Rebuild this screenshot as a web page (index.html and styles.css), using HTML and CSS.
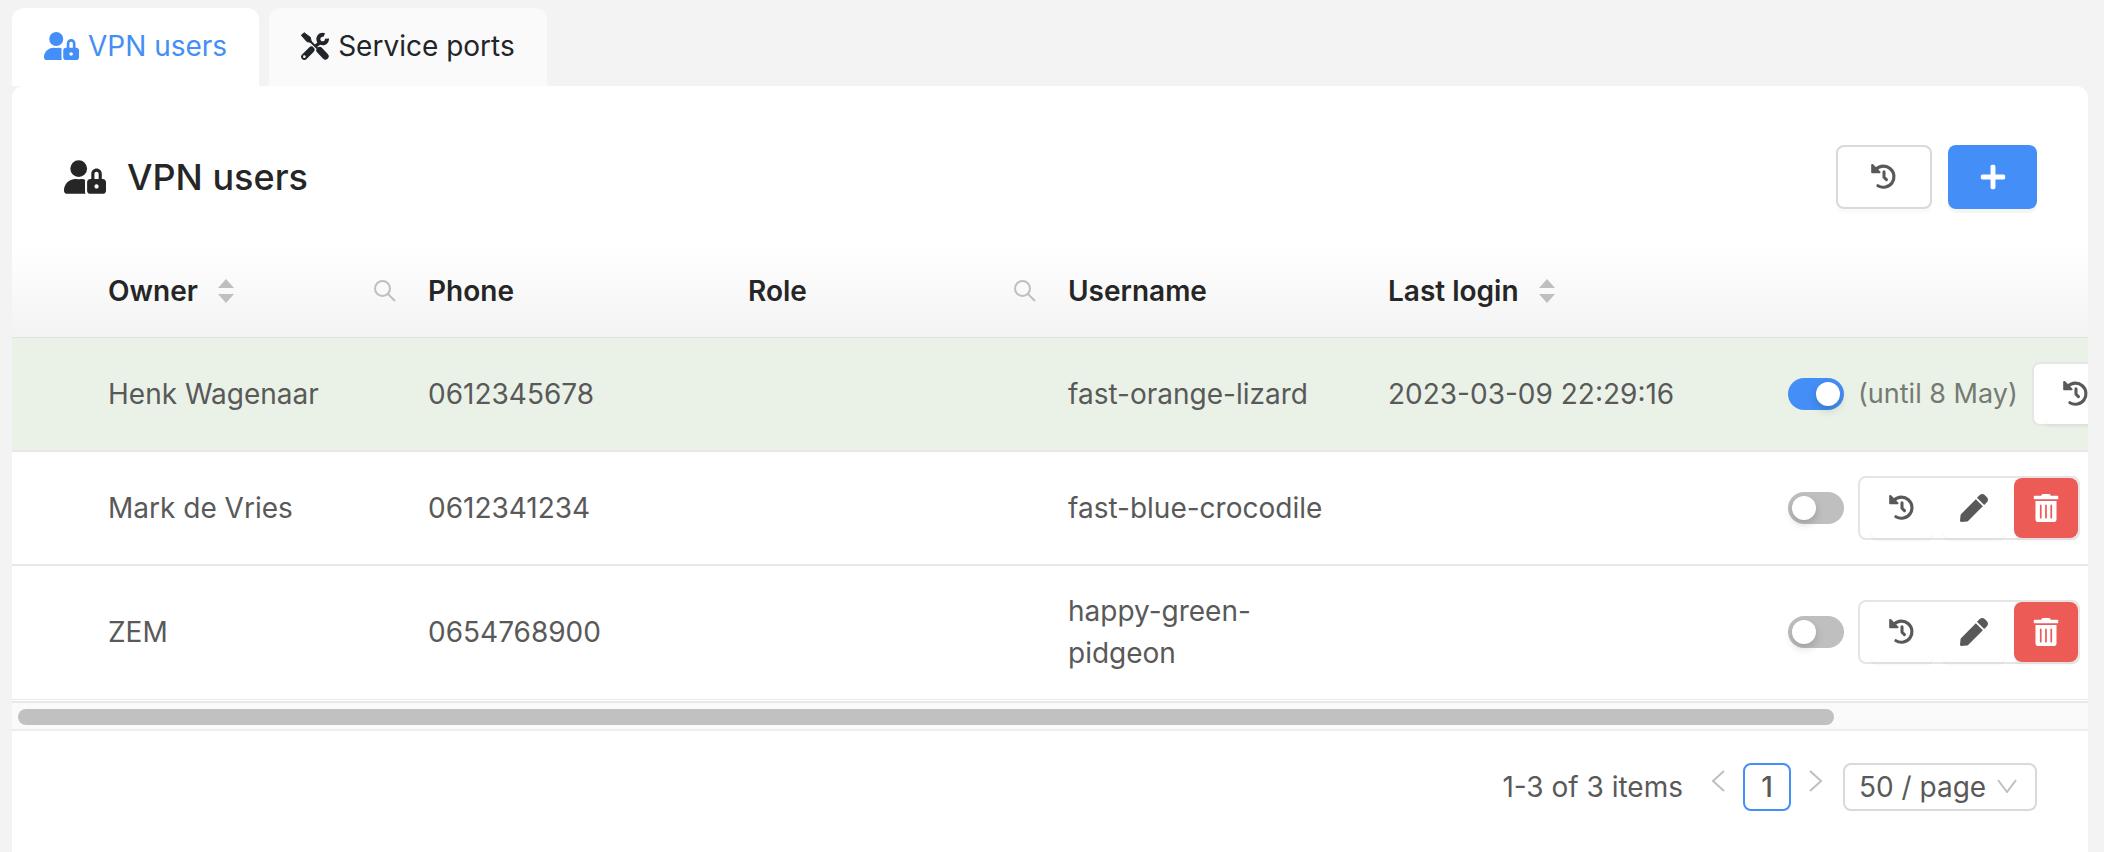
FILE: index.html
```html
<!DOCTYPE html>
<html lang="en">
<head>
    <meta charset="UTF-8">
    <title>VPN users</title>
    <meta name="viewport" content="width=device-width, initial-scale=1.0">
    <link rel="stylesheet" href="styles.css">
</head>
<body>
    <!-- Icons -->
    <svg class="sprite" aria-hidden="true">
        <symbol id="user-lock" viewBox="0 0 640 512">
            <path d="M224 256A128 128 0 1 0 224 0a128 128 0 1 0 0 256zm96 64c0-7 1-13 3-19c-15-8-32-13-49-13h-17a174 174 0 0 1-67 0h-16C78 288 0 366 0 462v2c0 27 21 48 48 48h281c-6-9-9-20-9-32zM592 288h-16v-80c0-44-36-80-80-80s-80 36-80 80v80h-16c-27 0-48 21-48 48v128c0 27 21 48 48 48h192c27 0 48-21 48-48V336c0-27-21-48-48-48zM496 432c-18 0-32-14-32-32s14-32 32-32 32 14 32 32-14 32-32 32zm32-144h-64v-80c0-18 14-32 32-32s32 14 32 32z"/>
        </symbol>
        <symbol id="tools" viewBox="0 0 84 84">
            <path d="M1 10L9 2L28 16L31 31L18 29z" stroke="currentColor" stroke-width="3" stroke-linejoin="round"/>
            <path d="M24 24L56 56" fill="none" stroke="currentColor" stroke-width="6"/>
            <path d="M56 55L73 73" fill="none" stroke="currentColor" stroke-width="20" stroke-linecap="round"/>
            <path d="M44 42L58 31" fill="none" stroke="currentColor" stroke-width="10"/>
            <path d="M70 9A13 13 0 1 0 78 20" fill="none" stroke="currentColor" stroke-width="12"/>
            <path d="M10 74L31 53" fill="none" stroke="currentColor" stroke-width="19" stroke-linecap="round"/>
            <circle class="hole" cx="10" cy="74" r="4"/>
        </symbol>
        <symbol id="history" viewBox="0 0 512 512">
            <path d="M4 22v140c0 13 9 22 22 22h140c20 0 29-23 15-37L41 7C27-7 4 2 4 22z"/>
            <path d="M100 108A208 208 0 1 1 136 436" fill="none" stroke="currentColor" stroke-width="62" stroke-linecap="round" transform="translate(0 -8)"/>
            <path d="M256 152v108l48 48" fill="none" stroke="currentColor" stroke-width="60" stroke-linecap="round" stroke-linejoin="round"/>
        </symbol>
        <symbol id="plus" viewBox="0 0 512 512">
            <path d="M464 208H304V48c0-18-14-32-32-32h-32c-18 0-32 14-32 32v160H48c-18 0-32 14-32 32v32c0 18 14 32 32 32h160v160c0 18 14 32 32 32h32c18 0 32-14 32-32V304h160c18 0 32-14 32-32v-32c0-18-14-32-32-32z"/>
        </symbol>
        <symbol id="pencil" viewBox="0 0 512 512">
            <path d="M290 94l128 128-270 270c-6 6-13 10-22 11L27 512c-15 2-29-11-27-27l11-99c1-8 5-16 11-22zM493 60l-41-41c-25-25-66-25-91 0l-51 51 132 132 51-51c25-25 25-66 0-91z"/>
        </symbol>
        <symbol id="trash" viewBox="0 0 448 512">
            <path d="M32 464c0 27 21 48 48 48h288c27 0 48-21 48-48V128H32zm272-256c0-21 32-21 32 0v224c0 21-32 21-32 0zm-96 0c0-21 32-21 32 0v224c0 21-32 21-32 0zm-96 0c0-21 32-21 32 0v224c0 21-32 21-32 0zM432 32H312l-9-19c-4-8-12-13-22-13H167c-9 0-18 5-22 13l-9 19H16C7 32 0 39 0 48v32c0 9 7 16 16 16h416c9 0 16-7 16-16V48c0-9-7-16-16-16z"/>
        </symbol>
        <symbol id="search" viewBox="0 0 22 22">
            <path d="M14 14L21 21M16 8.500A7.500 7.500 0 1 1 1 8.500A7.500 7.500 0 1 1 16 8.500" fill="none" stroke="currentColor" stroke-width="2"/>
        </symbol>
        <symbol id="sorter" viewBox="0 0 16 24">
            <path d="M8 0L16 9H0zM8 24L0 15H16z"/>
        </symbol>
    </svg>

    <!-- Tabs -->
    <nav class="tabs">
        <a class="tab active" href="#users"><svg class="icon-tab wide"><use href="#user-lock"/></svg>VPN users</a>
        <a class="tab" href="#ports"><svg class="icon-tab"><use href="#tools"/></svg>Service ports</a>
    </nav>

    <main class="card" id="users">
        <header class="card-header">
            <svg class="icon-title"><use href="#user-lock"/></svg>
            <h1>VPN users</h1>
            <button class="btn" aria-label="History"><svg class="icon"><use href="#history"/></svg></button>
            <button class="btn primary" aria-label="Add user"><svg class="icon"><use href="#plus"/></svg></button>
        </header>

        <div class="table-wrap">
            <table>
                <colgroup>
                    <col class="col-pad">
                    <col class="col-text">
                    <col class="col-text">
                    <col class="col-text">
                    <col class="col-text">
                    <col class="col-login">
                    <col class="col-actions">
                </colgroup>
                <thead>
                    <tr>
                        <th></th>
                        <th><div class="head">Owner <svg class="sorter"><use href="#sorter"/></svg><svg class="search"><use href="#search"/></svg></div></th>
                        <th>Phone</th>
                        <th><div class="head">Role <svg class="search"><use href="#search"/></svg></div></th>
                        <th>Username</th>
                        <th><div class="head">Last login <svg class="sorter"><use href="#sorter"/></svg></div></th>
                        <th></th>
                    </tr>
                </thead>
                <tbody>
                    <tr class="online">
                        <td></td>
                        <td>Henk Wagenaar</td>
                        <td>0612345678</td>
                        <td></td>
                        <td>fast-orange-lizard</td>
                        <td>2023-03-09 22:29:16</td>
                        <td>
                            <div class="actions">
                                <input class="switch" type="checkbox" aria-label="Enable Henk Wagenaar" checked>
                                <span class="until">(until 8 May)</span>
                                <div class="group">
                                    <button class="item" aria-label="History"><svg class="icon"><use href="#history"/></svg></button>
                                    <button class="item" aria-label="Edit"><svg class="icon-large"><use href="#pencil"/></svg></button>
                                    <button class="item danger" aria-label="Delete"><svg class="icon-large"><use href="#trash"/></svg></button>
                                </div>
                            </div>
                        </td>
                    </tr>
                    <tr>
                        <td></td>
                        <td>Mark de Vries</td>
                        <td>0612341234</td>
                        <td></td>
                        <td>fast-blue-crocodile</td>
                        <td></td>
                        <td>
                            <div class="actions">
                                <input class="switch" type="checkbox" aria-label="Enable Mark de Vries">
                                <div class="group">
                                    <button class="item" aria-label="History"><svg class="icon"><use href="#history"/></svg></button>
                                    <button class="item" aria-label="Edit"><svg class="icon-large"><use href="#pencil"/></svg></button>
                                    <button class="item danger" aria-label="Delete"><svg class="icon-large"><use href="#trash"/></svg></button>
                                </div>
                            </div>
                        </td>
                    </tr>
                    <tr>
                        <td></td>
                        <td>ZEM</td>
                        <td>0654768900</td>
                        <td></td>
                        <td>happy-green-<br>pidgeon</td>
                        <td></td>
                        <td>
                            <div class="actions">
                                <input class="switch" type="checkbox" aria-label="Enable ZEM">
                                <div class="group">
                                    <button class="item" aria-label="History"><svg class="icon"><use href="#history"/></svg></button>
                                    <button class="item" aria-label="Edit"><svg class="icon-large"><use href="#pencil"/></svg></button>
                                    <button class="item danger" aria-label="Delete"><svg class="icon-large"><use href="#trash"/></svg></button>
                                </div>
                            </div>
                        </td>
                    </tr>
                </tbody>
            </table>
        </div>
        <div class="scrollbar"><div class="thumb"></div></div>

        <!-- Pagination -->
        <footer class="pagination">
            <span class="total">1-3 of 3 items</span>
            <button class="arrow" aria-label="Previous page"><svg viewBox="0 0 14 22"><path d="M13 1L2 11L13 21"/></svg></button>
            <button class="page">1</button>
            <button class="arrow" aria-label="Next page"><svg viewBox="0 0 14 22"><path d="M1 1L12 11L1 21"/></svg></button>
            <div class="page-size">
                <select aria-label="Page size">
                    <option>50 / page</option>
                    <option>100 / page</option>
                </select>
                <svg class="caret" viewBox="0 0 20 14"><path d="M1 1L10 13L19 1"/></svg>
            </div>
        </footer>
    </main>
</body>
</html>
```
FILE: styles.css
```css
:root {
    --primary: #448ef7;
    --danger: #ed5b56;
    --text: #595959;
    --heading: #262626;
    --border: #d9d9d9;
    --line: #e8e8e8;
    --muted: #bfbfbf;
}

* {
    box-sizing: border-box;
}

body {
    margin: 0;
    padding: 8px 16px 0 12px;
    min-height: 100vh;
    display: flex;
    flex-direction: column;
    background: #f3f3f3;
    color: var(--text);
    font-family: Inter, "Liberation Sans", sans-serif;
    font-size: 28px;
    line-height: 42px;
}

svg {
    display: block;
    fill: currentColor;
    flex: none;
}

button, select {
    font: inherit;
    color: inherit;
    margin: 0;
    padding: 0;
}

.sprite {
    position: absolute;
    width: 0;
    height: 0;
}

/* Tabs */
.tabs {
    display: flex;
    gap: 10px;
}

.tab {
    display: flex;
    align-items: center;
    gap: 9px;
    height: 78px;
    padding: 0 32px 2px;
    border-radius: 12px 12px 0 0;
    background: #fafafa;
    color: #212529;
    text-decoration: none;
}

.tab.active {
    background: #fff;
    color: var(--primary);
}

.icon-tab {
    width: 28px;
    height: 28px;
}

.icon-tab.wide {
    width: 35px;
}

.hole {
    fill: #fafafa;
}

/* Card */
.card {
    flex: 1;
    background: #fff;
    border-radius: 12px 12px 0 0;
}

.card-header {
    display: flex;
    align-items: center;
    gap: 16px;
    padding: 59px 51px 37px 52px;
}

.icon-title {
    width: 42px;
    height: 34px;
    color: var(--heading);
}

h1 {
    flex: 1;
    margin: 0 0 0 5px;
    color: var(--heading);
    font-size: 36px;
    font-weight: 500;
}

.btn {
    display: flex;
    align-items: center;
    justify-content: center;
    width: 96px;
    height: 64px;
    border: 2px solid var(--border);
    border-radius: 8px;
    background: #fff;
    box-shadow: 0 4px 0 rgba(0, 0, 0, 0.02);
}

.btn.primary {
    width: 89px;
    border: 0;
    background: var(--primary);
    color: #fff;
    box-shadow: 0 4px 0 rgba(0, 0, 0, 0.04);
}

.icon {
    width: 26px;
    height: 26px;
}

.icon-large {
    width: 28px;
    height: 28px;
}

/* Table */
.table-wrap {
    overflow: hidden;
}

table {
    width: 2376px;
    table-layout: fixed;
    border-collapse: separate;
    border-spacing: 0;
}

.col-pad {
    width: 80px;
}

.col-text {
    width: 320px;
}

.col-login {
    width: 400px;
}

th {
    padding: 24px 16px 25px;
    border-bottom: 1px solid #e2e2e2;
    color: var(--heading);
    font-weight: 600;
    text-align: left;
}

thead tr {
    background: linear-gradient(#fff, #f3f3f3);
}

.head {
    display: flex;
    align-items: center;
}

.sorter {
    width: 16px;
    height: 24px;
    margin-left: 20px;
    color: var(--muted);
}

.search {
    width: 22px;
    height: 22px;
    margin-left: auto;
    color: var(--muted);
}

td {
    padding: 24px 16px;
    border-bottom: 2px solid var(--line);
}

tr:last-child td {
    padding-bottom: 25px;
    border-bottom-width: 1px;
}

.online {
    background: #eaf2e7;
}

.actions {
    display: flex;
    align-items: center;
    gap: 14px;
    height: 64px;
}

.until {
    color: #757a73;
    font-size: 27px;
}

.switch {
    appearance: none;
    display: flex;
    width: 56px;
    height: 32px;
    margin: 0;
    padding: 4px;
    border-radius: 16px;
    background: var(--muted);
}

.switch::before {
    content: '';
    width: 24px;
    height: 24px;
    border-radius: 50%;
    background: #fff;
    box-shadow: 0 4px 8px rgba(0, 35, 11, 0.2);
}

.switch:checked {
    justify-content: flex-end;
    background: var(--primary);
}

.group {
    display: flex;
    gap: 8px;
    padding-left: 10px;
    border: 2px solid #e5e5e5;
    border-radius: 8px;
    background: #fff;
}

.item {
    display: flex;
    align-items: center;
    justify-content: center;
    width: 64px;
    height: 60px;
    border: 0;
    border-radius: 8px;
    background: #fff;
    box-shadow: 0 4px 0 rgba(0, 0, 0, 0.02);
}

.item.danger {
    background: var(--danger);
    color: #fff;
}

/* Horizontal scrollbar */
.scrollbar {
    margin-top: 1px;
    padding: 6px 6px 4px;
    border-top: 2px solid var(--line);
    border-bottom: 2px solid #ededed;
    background: #fafafa;
}

.thumb {
    width: 88%;
    height: 16px;
    border-radius: 8px;
    background: #c1c1c1;
}

/* Pagination */
.pagination {
    display: flex;
    justify-content: flex-end;
    padding: 32px 51px 32px 0;
}

.total {
    margin-right: 28px;
    line-height: 48px;
}

.arrow {
    display: flex;
    align-items: center;
    height: 36px;
    border: 0;
    background: none;
}

.arrow svg {
    width: 14px;
    height: 22px;
}

.arrow svg, .caret {
    fill: none;
    stroke: var(--muted);
    stroke-width: 2;
}

.page {
    width: 48px;
    height: 48px;
    margin: 0 18px;
    border: 2px solid var(--primary);
    border-radius: 8px;
    background: #fff;
    font-weight: 500;
}

.page-size {
    position: relative;
    margin-left: 20px;
}

.page-size select {
    appearance: none;
    width: 194px;
    height: 48px;
    padding-left: 14px;
    border: 2px solid var(--border);
    border-radius: 8px;
    background: #fff;
}

.caret {
    position: absolute;
    top: 16px;
    right: 20px;
    width: 20px;
    height: 14px;
    pointer-events: none;
}
```
